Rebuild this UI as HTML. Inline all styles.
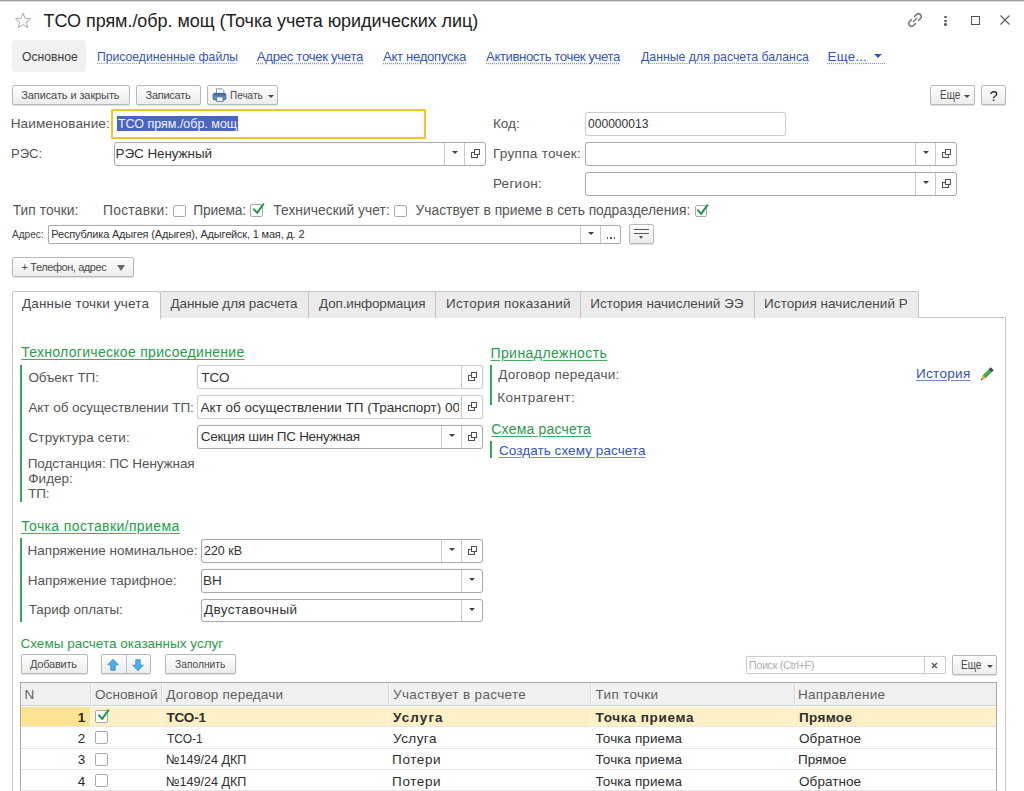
<!DOCTYPE html>
<html><head><meta charset="utf-8">
<style>
*{box-sizing:border-box;margin:0;padding:0}
html,body{width:1024px;height:791px;overflow:hidden;background:#fff;font-family:"Liberation Sans",sans-serif;color:#333;position:relative}
.a{position:absolute;white-space:nowrap;line-height:1}
</style></head><body>
<div class="a" style="left:0px;top:0px;width:1024px;height:1px;background:#9d9d9d"></div>
<div class="a" style="left:0px;top:1px;width:1024px;height:1px;background:#dedede"></div>
<svg class="a" style="left:14px;top:12px" width="18" height="17" viewBox="0 0 18 17"><path d="M9 1.3 L11.1 6.3 L16.5 6.7 L12.4 10.2 L13.7 15.5 L9 12.6 L4.3 15.5 L5.6 10.2 L1.5 6.7 L6.9 6.3 Z" fill="none" stroke="#b4b7ba" stroke-width="1.1" stroke-linejoin="round"/></svg>
<div class="a" style="left:43.50px;top:11.96px;font-size:18px;color:#1e1e1e;letter-spacing:-0.043px;">ТСО прям./обр. мощ (Точка учета юридических лиц)</div>
<svg class="a" style="left:906px;top:11px" width="18" height="18" viewBox="0 0 18 18"><g fill="none" stroke="#7a7a7a" stroke-width="1.5" stroke-linecap="round"><path d="M7.3 10.7 L10.7 7.3"/><path d="M8.6 5.4 L10.6 3.4 Q12.6 1.7 14.4 3.6 Q16.3 5.4 14.6 7.4 L12.6 9.4"/><path d="M9.4 12.6 L7.4 14.6 Q5.4 16.3 3.6 14.4 Q1.7 12.6 3.4 10.6 L5.4 8.6"/></g></svg>
<div class="a" style="left:944.2px;top:15.7px;width:2.5px;height:2.5px;background:#606060;border-radius:50%"></div>
<div class="a" style="left:944.2px;top:19.5px;width:2.5px;height:2.5px;background:#606060;border-radius:50%"></div>
<div class="a" style="left:944.2px;top:23.3px;width:2.5px;height:2.5px;background:#606060;border-radius:50%"></div>
<div class="a" style="left:971px;top:16px;width:9px;height:9px;border:1.4px solid #555"></div>
<svg class="a" style="left:1000px;top:15px" width="10" height="10" viewBox="0 0 10 10"><path d="M0.5 0.5 L9.5 9.5 M9.5 0.5 L0.5 9.5" stroke="#666" stroke-width="1.3"/></svg>
<div class="a" style="left:12px;top:40px;width:74px;height:32px;background:#f1f1f1;border-radius:4px"></div>
<div class="a" style="left:21.80px;top:50.23px;font-size:13.2px;color:#3a3a3a;transform:scaleX(0.9219);transform-origin:0 0;">Основное</div>
<div class="a" style="left:96.58px;top:50.23px;font-size:13.2px;color:#3355b9;transform:scaleX(0.9235);transform-origin:0 0;text-decoration:underline dotted #7b92d8;text-underline-offset:1.5px">Присоединенные файлы</div>
<div class="a" style="left:256.80px;top:50.23px;font-size:13.2px;color:#3355b9;letter-spacing:-0.315px;text-decoration:underline dotted #7b92d8;text-underline-offset:1.5px">Адрес точек учета</div>
<div class="a" style="left:383.00px;top:50.23px;font-size:13.2px;color:#3355b9;letter-spacing:-0.334px;text-decoration:underline dotted #7b92d8;text-underline-offset:1.5px">Акт недопуска</div>
<div class="a" style="left:486.00px;top:50.23px;font-size:13.2px;color:#3355b9;letter-spacing:-0.416px;text-decoration:underline dotted #7b92d8;text-underline-offset:1.5px">Активность точек учета</div>
<div class="a" style="left:640.50px;top:50.23px;font-size:13.2px;color:#3355b9;transform:scaleX(0.9322);transform-origin:0 0;text-decoration:underline dotted #7b92d8;text-underline-offset:1.5px">Данные для расчета баланса</div>
<div class="a" style="left:827.60px;top:50.23px;font-size:13.2px;color:#3355b9;letter-spacing:0.268px;text-decoration:underline dotted #7b92d8;text-underline-offset:1.5px">Еще...</div>
<div class="a" style="left:866px;top:63px;width:19px;height:1px;border-top:1px dotted #7b92d8"></div>
<div class="a" style="left:874.40px;top:54px;width:0;height:0;border-left:4.0px solid transparent;border-right:4.0px solid transparent;border-top:4px solid #3355b9"></div>
<div class="a" style="left:12px;top:85px;width:118px;height:20px;border:1px solid #b8b8b8;border-radius:2px;background:linear-gradient(#fefefe,#ececec);box-shadow:0 1px 1px rgba(0,0,0,.14)"></div>
<div class="a" style="left:21.25px;top:89.99px;font-size:11px;color:#4a4a4a;letter-spacing:-0.100px;">Записать и закрыть</div>
<div class="a" style="left:136px;top:85px;width:65px;height:20px;border:1px solid #b8b8b8;border-radius:2px;background:linear-gradient(#fefefe,#ececec);box-shadow:0 1px 1px rgba(0,0,0,.14)"></div>
<div class="a" style="left:145.60px;top:89.99px;font-size:11px;color:#4a4a4a;letter-spacing:-0.282px;">Записать</div>
<div class="a" style="left:207px;top:85px;width:71px;height:20px;border:1px solid #b8b8b8;border-radius:2px;background:linear-gradient(#fefefe,#ececec);box-shadow:0 1px 1px rgba(0,0,0,.14)"></div>
<div class="a" style="left:229.90px;top:89.99px;font-size:11px;color:#4a4a4a;transform:scaleX(0.9062);transform-origin:0 0;">Печать</div>
<svg class="a" style="left:212px;top:88px" width="15" height="14" viewBox="0 0 15 14"><path d="M4.5 0.8 H10 L11.8 2.6 V5.5 H4.5 Z" fill="#fff" stroke="#7d8c9c" stroke-width="0.9"/><rect x="1.2" y="5.3" width="12.6" height="6.6" rx="1.6" fill="#5c8bbd" stroke="#3c6894" stroke-width="1"/><rect x="1.8" y="5.8" width="11.4" height="1.6" fill="#3f6a96"/><rect x="4.6" y="9" width="6.4" height="4.4" fill="#fff" stroke="#4d7299" stroke-width="0.8"/></svg>
<div class="a" style="left:267.60px;top:94.5px;width:0;height:0;border-left:3.0px solid transparent;border-right:3.0px solid transparent;border-top:3.5px solid #484848"></div>
<div class="a" style="left:930px;top:85px;width:45px;height:20px;border:1px solid #b8b8b8;border-radius:2px;background:linear-gradient(#fefefe,#ececec);box-shadow:0 1px 1px rgba(0,0,0,.14)"></div>
<div class="a" style="left:939.50px;top:89.34px;font-size:12px;color:#4a4a4a;transform:scaleX(0.8285);transform-origin:0 0;">Еще</div>
<div class="a" style="left:963.80px;top:94.5px;width:0;height:0;border-left:3.0px solid transparent;border-right:3.0px solid transparent;border-top:3.5px solid #484848"></div>
<div class="a" style="left:981px;top:85px;width:25px;height:20px;border:1px solid #b8b8b8;border-radius:2px;background:linear-gradient(#fefefe,#ececec);box-shadow:0 1px 1px rgba(0,0,0,.14)"></div>
<div class="a" style="left:989.80px;top:89.23px;font-size:14.5px;color:#1a1a1a;">?</div>
<div class="a" style="left:10.70px;top:117.29px;font-size:13.6px;color:#555555;letter-spacing:0.089px;">Наименование:</div>
<div class="a" style="left:111px;top:109px;width:315px;height:30px;border:2px solid #f5c325;border-radius:1px"></div>
<div class="a" style="left:117px;top:115.7px;width:120.8px;height:15px;background:#4a65c6"></div>
<div class="a" style="left:118.00px;top:116.87px;font-size:13.5px;color:#f4f4fa;transform:scaleX(0.9243);transform-origin:0 0;">ТСО прям./обр. мощ</div>
<div class="a" style="left:10.84px;top:146.79px;font-size:13.6px;color:#555555;transform:scaleX(0.9558);transform-origin:0 0;">РЭС:</div>
<div class="a" style="left:114px;top:142px;width:372px;height:24px;border:1px solid #ababab;border-radius:3px;background:#fff;box-shadow:0 0 1px rgba(0,0,0,.18)"></div>
<div class="a" style="left:444px;top:143px;width:1px;height:22px;background:#cacaca"></div>
<div class="a" style="left:451.50px;top:151px;width:0;height:0;border-left:3.0px solid transparent;border-right:3.0px solid transparent;border-top:3.5px solid #404040"></div>
<div class="a" style="left:464px;top:143px;width:1px;height:22px;background:#cacaca"></div>
<svg class="a" style="left:471px;top:149px" width="10" height="10" viewBox="0 0 10 10"><path d="M3.5 0.5h5v5h-5z" fill="none" stroke="#505050" stroke-width="1.05"/><path d="M3 3.5H0.5V8.5H6.5V6" fill="none" stroke="#505050" stroke-width="1.05"/></svg>
<div class="a" style="left:115.60px;top:146.87px;font-size:13.5px;color:#333;letter-spacing:-0.101px;">РЭС Ненужный</div>
<div class="a" style="left:492.90px;top:117.19px;font-size:13.6px;color:#555555;letter-spacing:-0.037px;">Код:</div>
<div class="a" style="left:585px;top:112px;width:201px;height:24px;border:1px solid #cdcdcd;border-radius:3px;background:#fff;box-shadow:0 0 1px rgba(0,0,0,.18)"></div>
<div class="a" style="left:588.00px;top:116.87px;font-size:13.5px;color:#333;transform:scaleX(0.8947);transform-origin:0 0;">000000013</div>
<div class="a" style="left:492.90px;top:146.79px;font-size:13.6px;color:#555555;letter-spacing:0.276px;">Группа точек:</div>
<div class="a" style="left:585px;top:142px;width:372px;height:24px;border:1px solid #ababab;border-radius:3px;background:#fff;box-shadow:0 0 1px rgba(0,0,0,.18)"></div>
<div class="a" style="left:915px;top:143px;width:1px;height:22px;background:#cacaca"></div>
<div class="a" style="left:922.50px;top:151px;width:0;height:0;border-left:3.0px solid transparent;border-right:3.0px solid transparent;border-top:3.5px solid #404040"></div>
<div class="a" style="left:935px;top:143px;width:1px;height:22px;background:#cacaca"></div>
<svg class="a" style="left:942px;top:149px" width="10" height="10" viewBox="0 0 10 10"><path d="M3.5 0.5h5v5h-5z" fill="none" stroke="#505050" stroke-width="1.05"/><path d="M3 3.5H0.5V8.5H6.5V6" fill="none" stroke="#505050" stroke-width="1.05"/></svg>
<div class="a" style="left:492.90px;top:176.89px;font-size:13.6px;color:#555555;letter-spacing:0.242px;">Регион:</div>
<div class="a" style="left:585px;top:172px;width:372px;height:24px;border:1px solid #ababab;border-radius:3px;background:#fff;box-shadow:0 0 1px rgba(0,0,0,.18)"></div>
<div class="a" style="left:915px;top:173px;width:1px;height:22px;background:#cacaca"></div>
<div class="a" style="left:922.50px;top:181px;width:0;height:0;border-left:3.0px solid transparent;border-right:3.0px solid transparent;border-top:3.5px solid #404040"></div>
<div class="a" style="left:935px;top:173px;width:1px;height:22px;background:#cacaca"></div>
<svg class="a" style="left:942px;top:179px" width="10" height="10" viewBox="0 0 10 10"><path d="M3.5 0.5h5v5h-5z" fill="none" stroke="#505050" stroke-width="1.05"/><path d="M3 3.5H0.5V8.5H6.5V6" fill="none" stroke="#505050" stroke-width="1.05"/></svg>
<div class="a" style="left:12.70px;top:203.62px;font-size:13.8px;color:#555555;letter-spacing:0.056px;">Тип точки:</div>
<div class="a" style="left:103.00px;top:203.62px;font-size:13.8px;color:#555555;letter-spacing:0.275px;">Поставки:</div>
<div class="a" style="left:172.5px;top:204.5px;width:13px;height:12.5px;border:1px solid #a9a9a9;border-radius:2px;background:#fff"></div>
<div class="a" style="left:193.20px;top:203.62px;font-size:13.8px;color:#555555;letter-spacing:-0.171px;">Приема:</div>
<div class="a" style="left:250px;top:204px;width:13px;height:13px;border:1px solid #a9a9a9;border-radius:2px;background:#fff"></div>
<svg class="a" style="left:249.5px;top:203px" width="16" height="16" viewBox="0 0 16 16"><path d="M4 6.3 L7.2 9.9 L13.4 1.2" fill="none" stroke="#1c9c4b" stroke-width="2" stroke-linecap="round" stroke-linejoin="round"/></svg>
<div class="a" style="left:273.30px;top:203.62px;font-size:13.8px;color:#555555;letter-spacing:0.043px;">Технический учет:</div>
<div class="a" style="left:394px;top:204.5px;width:13px;height:12.5px;border:1px solid #a9a9a9;border-radius:2px;background:#fff"></div>
<div class="a" style="left:415.60px;top:203.62px;font-size:13.8px;color:#555555;letter-spacing:-0.009px;">Участвует в приеме в сеть подразделения:</div>
<div class="a" style="left:694.5px;top:204.5px;width:12.5px;height:12.5px;border:1px solid #a9a9a9;border-radius:2px;background:#fff"></div>
<svg class="a" style="left:694.0px;top:203.5px" width="16" height="16" viewBox="0 0 16 16"><path d="M4 6.3 L7.2 9.9 L13.4 1.2" fill="none" stroke="#1c9c4b" stroke-width="2" stroke-linecap="round" stroke-linejoin="round"/></svg>
<div class="a" style="left:11.80px;top:228.99px;font-size:11px;color:#444;transform:scaleX(0.9162);transform-origin:0 0;">Адрес:</div>
<div class="a" style="left:48px;top:225px;width:573px;height:19px;border:1px solid #ababab;border-radius:2px;background:#fff;box-shadow:0 0 1px rgba(0,0,0,.18)"></div>
<div class="a" style="left:580px;top:226px;width:1px;height:17px;background:#cacaca"></div>
<div class="a" style="left:587.50px;top:232px;width:0;height:0;border-left:3.0px solid transparent;border-right:3.0px solid transparent;border-top:3.5px solid #404040"></div>
<div class="a" style="left:600px;top:226px;width:1px;height:17px;background:#cacaca"></div>
<div class="a" style="left:606.7px;top:237.1px;width:1.5px;height:1.5px;background:#555"></div>
<div class="a" style="left:610.2px;top:237.1px;width:1.5px;height:1.5px;background:#555"></div>
<div class="a" style="left:613.7px;top:237.1px;width:1.5px;height:1.5px;background:#555"></div>
<div class="a" style="left:51.30px;top:228.99px;font-size:11px;color:#333;letter-spacing:-0.180px;">Республика Адыгея (Адыгея), Адыгейск, 1 мая, д. 2</div>
<div class="a" style="left:629px;top:224px;width:25px;height:20px;border:1px solid #b8b8b8;border-radius:2px;background:linear-gradient(#fefefe,#ececec);box-shadow:0 1px 1px rgba(0,0,0,.14)"></div>
<div class="a" style="left:634px;top:229px;width:15px;height:1px;background:#555"></div>
<div class="a" style="left:634px;top:232.5px;width:15px;height:1px;background:#555"></div>
<div class="a" style="left:639.00px;top:236px;width:0;height:0;border-left:2.5px solid transparent;border-right:2.5px solid transparent;border-top:3px solid #555"></div>
<div class="a" style="left:12px;top:257px;width:122px;height:20px;border:1px solid #b8b8b8;border-radius:2px;background:linear-gradient(#fefefe,#ececec);box-shadow:0 1px 1px rgba(0,0,0,.14)"></div>
<div class="a" style="left:21.60px;top:261.99px;font-size:11px;color:#4a4a4a;letter-spacing:-0.426px;">+ Телефон, адрес</div>
<div class="a" style="left:117.00px;top:264.5px;width:0;height:0;border-left:4.0px solid transparent;border-right:4.0px solid transparent;border-top:6px solid #6a6a6a"></div>
<div class="a" style="left:12px;top:317px;width:994px;height:500px;border:1px solid #c4c4c4;background:#fff"></div>
<div class="a" style="left:160px;top:291px;width:149px;height:27px;border:1px solid #c4c4c4;border-bottom:none;background:#ebebeb;border-radius:2px 2px 0 0"></div>
<div class="a" style="left:170.40px;top:297.47px;font-size:13.5px;color:#4a4a4a;letter-spacing:-0.081px;">Данные для расчета</div>
<div class="a" style="left:308px;top:291px;width:128px;height:27px;border:1px solid #c4c4c4;border-bottom:none;background:#ebebeb;border-radius:2px 2px 0 0"></div>
<div class="a" style="left:319.10px;top:297.47px;font-size:13.5px;color:#4a4a4a;letter-spacing:-0.150px;">Доп.информация</div>
<div class="a" style="left:435px;top:291px;width:146px;height:27px;border:1px solid #c4c4c4;border-bottom:none;background:#ebebeb;border-radius:2px 2px 0 0"></div>
<div class="a" style="left:446.00px;top:297.47px;font-size:13.5px;color:#4a4a4a;letter-spacing:0.239px;">История показаний</div>
<div class="a" style="left:580px;top:291px;width:175px;height:27px;border:1px solid #c4c4c4;border-bottom:none;background:#ebebeb;border-radius:2px 2px 0 0"></div>
<div class="a" style="left:590.30px;top:297.47px;font-size:13.5px;color:#4a4a4a;">История начислений ЭЭ</div>
<div class="a" style="left:754px;top:291px;width:165px;height:27px;border:1px solid #c4c4c4;border-bottom:none;background:#ebebeb;border-radius:2px 2px 0 0"></div>
<div class="a" style="left:764.10px;top:297.47px;font-size:13.5px;color:#4a4a4a;letter-spacing:0.049px;">История начислений Р</div>
<div class="a" style="left:12px;top:291px;width:149px;height:28px;border:1px solid #c4c4c4;border-bottom:none;background:#fff;border-radius:3px 3px 0 0"></div>
<div class="a" style="left:22.00px;top:297.47px;font-size:13.5px;color:#4a4a4a;letter-spacing:0.149px;">Данные точки учета</div>
<div class="a" style="left:21.20px;top:345.45px;font-size:14px;color:#2a9c4a;letter-spacing:0.293px;text-decoration:underline #46ac62;text-underline-offset:1.5px">Технологическое присоединение</div>
<div class="a" style="left:20px;top:365px;width:2px;height:137px;background:#36a55a"></div>
<div class="a" style="left:28.40px;top:370.77px;font-size:13.5px;color:#555555;letter-spacing:-0.097px;">Объект ТП:</div>
<div class="a" style="left:197px;top:365px;width:286px;height:24px;border:1px solid #cdcdcd;border-radius:3px;background:#fff;box-shadow:0 0 1px rgba(0,0,0,.18)"></div>
<div class="a" style="left:461px;top:366px;width:1px;height:22px;background:#cacaca"></div>
<svg class="a" style="left:468px;top:372px" width="10" height="10" viewBox="0 0 10 10"><path d="M3.5 0.5h5v5h-5z" fill="none" stroke="#505050" stroke-width="1.05"/><path d="M3 3.5H0.5V8.5H6.5V6" fill="none" stroke="#505050" stroke-width="1.05"/></svg>
<div class="a" style="left:201.20px;top:370.77px;font-size:13.5px;color:#333;">ТСО</div>
<div class="a" style="left:28.40px;top:400.67px;font-size:13.5px;color:#555555;letter-spacing:-0.051px;">Акт об осуществлении ТП:</div>
<div class="a" style="left:197px;top:395px;width:286px;height:24px;border:1px solid #cdcdcd;border-radius:3px;background:#fff;box-shadow:0 0 1px rgba(0,0,0,.18)"></div>
<div class="a" style="left:461px;top:396px;width:1px;height:22px;background:#cacaca"></div>
<svg class="a" style="left:468px;top:402px" width="10" height="10" viewBox="0 0 10 10"><path d="M3.5 0.5h5v5h-5z" fill="none" stroke="#505050" stroke-width="1.05"/><path d="M3 3.5H0.5V8.5H6.5V6" fill="none" stroke="#505050" stroke-width="1.05"/></svg>
<div class="a" style="left:200.60px;top:400.67px;font-size:13.5px;color:#333;width:258.90px;overflow:hidden;">Акт об осуществлении ТП (Транспорт) 0000</div>
<div class="a" style="left:28.40px;top:430.57px;font-size:13.5px;color:#555555;letter-spacing:0.162px;">Структура сети:</div>
<div class="a" style="left:197px;top:425px;width:286px;height:24px;border:1px solid #ababab;border-radius:3px;background:#fff;box-shadow:0 0 1px rgba(0,0,0,.18)"></div>
<div class="a" style="left:441px;top:426px;width:1px;height:22px;background:#cacaca"></div>
<div class="a" style="left:448.50px;top:434px;width:0;height:0;border-left:3.0px solid transparent;border-right:3.0px solid transparent;border-top:3.5px solid #404040"></div>
<div class="a" style="left:461px;top:426px;width:1px;height:22px;background:#cacaca"></div>
<svg class="a" style="left:468px;top:432px" width="10" height="10" viewBox="0 0 10 10"><path d="M3.5 0.5h5v5h-5z" fill="none" stroke="#505050" stroke-width="1.05"/><path d="M3 3.5H0.5V8.5H6.5V6" fill="none" stroke="#505050" stroke-width="1.05"/></svg>
<div class="a" style="left:200.80px;top:430.07px;font-size:13.5px;color:#333;letter-spacing:-0.280px;">Секция шин ПС Ненужная</div>
<div class="a" style="left:27.75px;top:456.67px;font-size:13.5px;color:#555555;letter-spacing:-0.083px;">Подстанция: ПС Ненужная</div>
<div class="a" style="left:28.30px;top:471.87px;font-size:13.5px;color:#555555;letter-spacing:0.020px;">Фидер:</div>
<div class="a" style="left:28.30px;top:487.07px;font-size:13.5px;color:#555555;letter-spacing:-0.275px;">ТП:</div>
<div class="a" style="left:21.20px;top:519.05px;font-size:14px;color:#2a9c4a;letter-spacing:0.379px;text-decoration:underline #46ac62;text-underline-offset:1.5px">Точка поставки/приема</div>
<div class="a" style="left:20px;top:538px;width:2px;height:84px;background:#36a55a"></div>
<div class="a" style="left:27.60px;top:543.67px;font-size:13.5px;color:#555555;">Напряжение номинальное:</div>
<div class="a" style="left:201px;top:539px;width:282px;height:24px;border:1px solid #ababab;border-radius:3px;background:#fff;box-shadow:0 0 1px rgba(0,0,0,.18)"></div>
<div class="a" style="left:441px;top:540px;width:1px;height:22px;background:#cacaca"></div>
<div class="a" style="left:448.50px;top:548px;width:0;height:0;border-left:3.0px solid transparent;border-right:3.0px solid transparent;border-top:3.5px solid #404040"></div>
<div class="a" style="left:461px;top:540px;width:1px;height:22px;background:#cacaca"></div>
<svg class="a" style="left:468px;top:546px" width="10" height="10" viewBox="0 0 10 10"><path d="M3.5 0.5h5v5h-5z" fill="none" stroke="#505050" stroke-width="1.05"/><path d="M3 3.5H0.5V8.5H6.5V6" fill="none" stroke="#505050" stroke-width="1.05"/></svg>
<div class="a" style="left:204.00px;top:543.67px;font-size:13.5px;color:#333;transform:scaleX(0.9228);transform-origin:0 0;">220 кВ</div>
<div class="a" style="left:27.75px;top:573.67px;font-size:13.5px;color:#555555;letter-spacing:0.042px;">Напряжение тарифное:</div>
<div class="a" style="left:201px;top:569px;width:282px;height:24px;border:1px solid #ababab;border-radius:3px;background:#fff;box-shadow:0 0 1px rgba(0,0,0,.18)"></div>
<div class="a" style="left:461px;top:570px;width:1px;height:22px;background:#cacaca"></div>
<div class="a" style="left:468.50px;top:578px;width:0;height:0;border-left:3.0px solid transparent;border-right:3.0px solid transparent;border-top:3.5px solid #404040"></div>
<div class="a" style="left:203.00px;top:573.67px;font-size:13.5px;color:#333;">ВН</div>
<div class="a" style="left:28.75px;top:603.47px;font-size:13.5px;color:#555555;letter-spacing:-0.046px;">Тариф оплаты:</div>
<div class="a" style="left:201px;top:599px;width:282px;height:23px;border:1px solid #ababab;border-radius:3px;background:#fff;box-shadow:0 0 1px rgba(0,0,0,.18)"></div>
<div class="a" style="left:461px;top:600px;width:1px;height:21px;background:#cacaca"></div>
<div class="a" style="left:468.50px;top:608px;width:0;height:0;border-left:3.0px solid transparent;border-right:3.0px solid transparent;border-top:3.5px solid #404040"></div>
<div class="a" style="left:204.00px;top:603.47px;font-size:13.5px;color:#333;letter-spacing:0.379px;">Двуставочный</div>
<div class="a" style="left:490.40px;top:346.15px;font-size:14px;color:#2a9c4a;letter-spacing:0.442px;text-decoration:underline #46ac62;text-underline-offset:1.5px">Принадлежность</div>
<div class="a" style="left:490px;top:365px;width:2px;height:40px;background:#36a55a"></div>
<div class="a" style="left:498.30px;top:368.07px;font-size:13.5px;color:#555555;letter-spacing:0.198px;">Договор передачи:</div>
<div class="a" style="left:497.30px;top:390.57px;font-size:13.5px;color:#555555;letter-spacing:0.380px;">Контрагент:</div>
<div class="a" style="left:916.00px;top:367.07px;font-size:13.5px;color:#3355b9;letter-spacing:0.310px;text-decoration:underline #6f8ad6;text-underline-offset:2px">История</div>
<svg class="a" style="left:980px;top:367px" width="14" height="14" viewBox="0 0 14 14"><path d="M2.7 8.3 L5.7 11.3 L0.6 13.4 Z" fill="#e9a43e"/><path d="M0.6 13.4 L1.4 11.4 L2.6 12.6 Z" fill="#444"/><path d="M2.7 8.3 L8.7 2.3 L11.7 5.3 L5.7 11.3 Z" fill="#45ab4a"/><path d="M8.7 2.3 L10.7 0.3 L13.7 3.3 L11.7 5.3 Z" fill="#3a4656"/></svg>
<div class="a" style="left:491.30px;top:421.65px;font-size:14px;color:#2a9c4a;letter-spacing:0.198px;text-decoration:underline #46ac62;text-underline-offset:1.5px">Схема расчета</div>
<div class="a" style="left:490px;top:441px;width:2px;height:17px;background:#36a55a"></div>
<div class="a" style="left:499.00px;top:443.87px;font-size:13.5px;color:#3355b9;letter-spacing:0.071px;text-decoration:underline #6f8ad6;text-underline-offset:2px">Создать схему расчета</div>
<div class="a" style="left:20.50px;top:636.67px;font-size:13.5px;color:#2a9c4a;letter-spacing:0.013px;">Схемы расчета оказанных услуг</div>
<div class="a" style="left:21px;top:654px;width:67px;height:20px;border:1px solid #b8b8b8;border-radius:2px;background:linear-gradient(#fefefe,#ececec);box-shadow:0 1px 1px rgba(0,0,0,.14)"></div>
<div class="a" style="left:29.90px;top:659.49px;font-size:11px;color:#4a4a4a;letter-spacing:-0.212px;">Добавить</div>
<div class="a" style="left:101px;top:654px;width:50px;height:20px;border:1px solid #b8b8b8;border-radius:2px;background:linear-gradient(#fefefe,#ececec);box-shadow:0 1px 1px rgba(0,0,0,.14)"></div>
<div class="a" style="left:126px;top:655px;width:1px;height:18px;background:#bdbdbd"></div>
<svg class="a" style="left:106px;top:658px" width="14" height="14" viewBox="0 0 14 14"><path d="M7 1.2 L12.3 6.8 H9.2 V12.3 H4.8 V6.8 H1.7 Z" fill="#4cafec" stroke="#2f88cc" stroke-width="0.8" stroke-linejoin="round"/></svg>
<svg class="a" style="left:131px;top:658px" width="14" height="14" viewBox="0 0 14 14"><path d="M7 12.8 L12.3 7.2 H9.2 V1.7 H4.8 V7.2 H1.7 Z" fill="#4cafec" stroke="#2f88cc" stroke-width="0.8" stroke-linejoin="round"/></svg>
<div class="a" style="left:165px;top:654px;width:71px;height:20px;border:1px solid #b8b8b8;border-radius:2px;background:linear-gradient(#fefefe,#ececec);box-shadow:0 1px 1px rgba(0,0,0,.14)"></div>
<div class="a" style="left:174.50px;top:659.49px;font-size:11px;color:#4a4a4a;transform:scaleX(0.9324);transform-origin:0 0;">Заполнить</div>
<div class="a" style="left:746px;top:656px;width:200px;height:18px;border:1px solid #cdcdcd;border-radius:2px;background:#fff;box-shadow:0 0 1px rgba(0,0,0,.18)"></div>
<div class="a" style="left:924px;top:657px;width:1px;height:16px;background:#cacaca"></div>
<svg class="a" style="left:931.0px;top:661.5px" width="7" height="7" viewBox="0 0 7 7"><path d="M1 1L6 6M6 1L1 6" stroke="#555" stroke-width="1.2"/></svg>
<div class="a" style="left:748.70px;top:659.69px;font-size:11px;color:#b0b0b0;letter-spacing:-0.412px;">Поиск (Ctrl+F)</div>
<div class="a" style="left:952px;top:655px;width:45px;height:20px;border:1px solid #b8b8b8;border-radius:2px;background:linear-gradient(#fefefe,#ececec);box-shadow:0 1px 1px rgba(0,0,0,.14)"></div>
<div class="a" style="left:961.10px;top:659.34px;font-size:12px;color:#4a4a4a;transform:scaleX(0.8366);transform-origin:0 0;">Еще</div>
<div class="a" style="left:986.80px;top:664.5px;width:0;height:0;border-left:3.0px solid transparent;border-right:3.0px solid transparent;border-top:3.5px solid #484848"></div>
<div class="a" style="left:20px;top:682px;width:977px;height:130px;border:1px solid #a8a8a8;background:#fff"></div>
<div class="a" style="left:21px;top:683px;width:975px;height:23px;background:#f0f0f0;border-bottom:1px solid #d0d0d0"></div>
<div class="a" style="left:90px;top:683px;width:1px;height:21px;background:#d9d9d9"></div>
<div class="a" style="left:91px;top:683px;width:1px;height:21px;background:#fafafa"></div>
<div class="a" style="left:161px;top:683px;width:1px;height:21px;background:#d9d9d9"></div>
<div class="a" style="left:162px;top:683px;width:1px;height:21px;background:#fafafa"></div>
<div class="a" style="left:388px;top:683px;width:1px;height:21px;background:#d9d9d9"></div>
<div class="a" style="left:389px;top:683px;width:1px;height:21px;background:#fafafa"></div>
<div class="a" style="left:590px;top:683px;width:1px;height:21px;background:#d9d9d9"></div>
<div class="a" style="left:591px;top:683px;width:1px;height:21px;background:#fafafa"></div>
<div class="a" style="left:794px;top:683px;width:1px;height:21px;background:#d9d9d9"></div>
<div class="a" style="left:795px;top:683px;width:1px;height:21px;background:#fafafa"></div>
<div class="a" style="left:24.60px;top:687.77px;font-size:13.5px;color:#5f5f5f;">N</div>
<div class="a" style="left:95.00px;top:687.77px;font-size:13.5px;color:#5f5f5f;letter-spacing:0.079px;">Основной</div>
<div class="a" style="left:166.25px;top:687.77px;font-size:13.5px;color:#5f5f5f;letter-spacing:0.191px;">Договор передачи</div>
<div class="a" style="left:393.10px;top:687.77px;font-size:13.5px;color:#5f5f5f;letter-spacing:0.334px;">Участвует в расчете</div>
<div class="a" style="left:595.60px;top:687.77px;font-size:13.5px;color:#5f5f5f;letter-spacing:0.308px;">Тип точки</div>
<div class="a" style="left:798.00px;top:687.77px;font-size:13.5px;color:#5f5f5f;letter-spacing:0.277px;">Направление</div>
<div class="a" style="left:21px;top:707px;width:975px;height:19px;background:#fdf0c6"></div>
<div class="a" style="left:21px;top:707px;width:69px;height:19px;background:#fce391"></div>
<div class="a" style="left:90px;top:707px;width:1px;height:19px;background:#fff8e4"></div>
<div class="a" style="left:161px;top:707px;width:1px;height:19px;background:#fff8e4"></div>
<div class="a" style="left:388px;top:707px;width:1px;height:19px;background:#fff8e4"></div>
<div class="a" style="left:590px;top:707px;width:1px;height:19px;background:#fff8e4"></div>
<div class="a" style="left:794px;top:707px;width:1px;height:19px;background:#fff8e4"></div>
<div class="a" style="left:21px;top:726px;width:975px;height:1px;background:#e6e6e6"></div>
<div class="a" style="left:21px;top:748px;width:975px;height:1px;background:#e6e6e6"></div>
<div class="a" style="left:21px;top:769px;width:975px;height:1px;background:#e6e6e6"></div>
<div class="a" style="left:21px;top:790px;width:975px;height:1px;background:#e6e6e6"></div>
<div class="a" style="left:40px;width:45.2px;text-align:right;top:710.77px;font-size:13.5px;color:#2a2a2a;font-weight:bold">1</div>
<div class="a" style="left:166.50px;top:710.77px;font-size:13.5px;color:#2e2e2e;font-weight:bold;letter-spacing:-0.164px;">ТСО-1</div>
<div class="a" style="left:393.10px;top:710.77px;font-size:13.5px;color:#2e2e2e;font-weight:bold;letter-spacing:1.083px;">Услуга</div>
<div class="a" style="left:595.60px;top:710.77px;font-size:13.5px;color:#2e2e2e;font-weight:bold;letter-spacing:0.673px;">Точка приема</div>
<div class="a" style="left:799.00px;top:710.77px;font-size:13.5px;color:#2e2e2e;font-weight:bold;letter-spacing:0.339px;">Прямое</div>
<div class="a" style="left:95px;top:710px;width:13px;height:13px;border:1px solid #a9a9a9;border-radius:2px;background:#fff"></div>
<svg class="a" style="left:94.5px;top:709px" width="16" height="16" viewBox="0 0 16 16"><path d="M4 6.3 L7.2 9.9 L13.4 1.2" fill="none" stroke="#1c9c4b" stroke-width="2" stroke-linecap="round" stroke-linejoin="round"/></svg>
<div class="a" style="left:40px;width:45.2px;text-align:right;top:732.02px;font-size:13.5px;color:#2a2a2a;font-weight:normal">2</div>
<div class="a" style="left:166.50px;top:732.02px;font-size:13.5px;color:#2e2e2e;transform:scaleX(0.8893);transform-origin:0 0;">ТСО-1</div>
<div class="a" style="left:393.10px;top:732.02px;font-size:13.5px;color:#2e2e2e;letter-spacing:0.425px;">Услуга</div>
<div class="a" style="left:595.60px;top:732.02px;font-size:13.5px;color:#2e2e2e;letter-spacing:0.078px;">Точка приема</div>
<div class="a" style="left:799.00px;top:732.02px;font-size:13.5px;color:#2e2e2e;letter-spacing:0.072px;">Обратное</div>
<div class="a" style="left:95px;top:731px;width:13px;height:13px;border:1px solid #a9a9a9;border-radius:2px;background:#fff"></div>
<div class="a" style="left:40px;width:45.2px;text-align:right;top:753.27px;font-size:13.5px;color:#2a2a2a;font-weight:normal">3</div>
<div class="a" style="left:165.57px;top:753.27px;font-size:13.5px;color:#2e2e2e;transform:scaleX(0.9316);transform-origin:0 0;">№149/24 ДКП</div>
<div class="a" style="left:392.10px;top:753.27px;font-size:13.5px;color:#2e2e2e;letter-spacing:0.588px;">Потери</div>
<div class="a" style="left:595.60px;top:753.27px;font-size:13.5px;color:#2e2e2e;letter-spacing:0.078px;">Точка приема</div>
<div class="a" style="left:798.00px;top:753.27px;font-size:13.5px;color:#2e2e2e;letter-spacing:-0.052px;">Прямое</div>
<div class="a" style="left:95px;top:753px;width:13px;height:13px;border:1px solid #a9a9a9;border-radius:2px;background:#fff"></div>
<div class="a" style="left:40px;width:45.2px;text-align:right;top:774.52px;font-size:13.5px;color:#2a2a2a;font-weight:normal">4</div>
<div class="a" style="left:165.57px;top:774.52px;font-size:13.5px;color:#2e2e2e;transform:scaleX(0.9316);transform-origin:0 0;">№149/24 ДКП</div>
<div class="a" style="left:392.10px;top:774.52px;font-size:13.5px;color:#2e2e2e;letter-spacing:0.588px;">Потери</div>
<div class="a" style="left:595.60px;top:774.52px;font-size:13.5px;color:#2e2e2e;letter-spacing:0.078px;">Точка приема</div>
<div class="a" style="left:799.00px;top:774.52px;font-size:13.5px;color:#2e2e2e;letter-spacing:0.072px;">Обратное</div>
<div class="a" style="left:95px;top:774px;width:13px;height:13px;border:1px solid #a9a9a9;border-radius:2px;background:#fff"></div>
</body></html>
